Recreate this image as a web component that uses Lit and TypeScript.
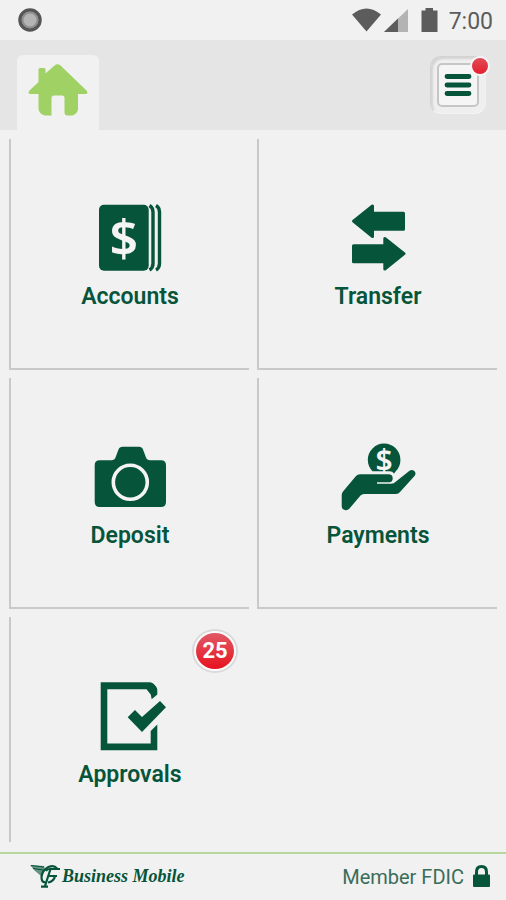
import { LitElement, html, css, svg, nothing } from "lit";
import { customElement } from "lit/decorators.js";

interface Tile {
  label: string;
  icon: unknown;
  badge?: number;
}

const accountsIcon = svg`
  <rect x="9" y="3.7" width="49.7" height="66" rx="5"/>
  <path d="M59.500 4.500Q63 6.500 63 11V62.500Q63 67 59.500 69M66 4.500Q69.500 6.500 69.500 11V62.500Q69.500 67 66 69" fill="none" stroke="currentColor" stroke-width="3.400"/>
  <text class="dollar" x="33.800" y="54.500" font-size="50" text-anchor="middle">$</text>`;

const transferIcon = svg`
  <g stroke="currentColor" stroke-width="3" stroke-linejoin="round">
    <path d="M15.500 20.200L34.500 5V12.200H65.500V28.300H34.500V35.500Z"/>
    <path d="M66 52.700L46.800 37.500V44.800H15.500V60.800H46.800V68Z"/>
  </g>`;

const depositIcon = svg`
  <path d="M9.700 20.300H21.500Q24.500 20.300 25.500 17.500L28.500 9.500Q29.500 6.700 32.500 6.700H49Q52 6.700 53 9.500L56 17.500Q57 20.300 60 20.300H71Q76 20.300 76 25.300V62Q76 67 71 67H9.700Q4.700 67 4.700 62V25.300Q4.700 20.300 9.700 20.300Z"/>
  <circle class="cut" cx="40.300" cy="42.300" r="17" stroke-width="3.600"/>`;

const paymentsIcon = svg`
  <path d="M34.500 31.300A16.300 16.300 0 1 1 58 31L56 33.500Q54.500 31.300 51.500 31.300Z"/>
  <text class="dollar" x="46" y="30.500" font-size="30" text-anchor="middle">$</text>
  <path d="M3.700 55Q3.700 53 5 51.500L18 36Q19.500 34.300 22 34.300H50.500Q54.700 34.300 54.700 38.400Q54.700 42 51 42.300H39V43.800H53Q56 43.800 58 41.500L71.500 30.800Q74 29 76.300 31Q78.500 33.200 76.700 35.700L62 52Q60.500 54 58 54H26Q24 54 22.500 55.500L11.500 68.500Q9.500 70.700 6.800 70Q3.700 69.300 3.700 66Z"/>`;

const approvalsIcon = svg`
  <path d="M10.700 3.300H60Q62 3.300 63.500 4.800L66 7.500Q67.300 9 67.300 11V15.500L61.700 20.300L60.700 15.500L56.500 10.300H17.300V64.500H60.700V52L67.300 45.500V71.300H10.700Z"/>
  <path d="M37.700 38.300L45 31L52 38L70 22L76 28.300L52 53Z"/>`;

@customElement("app-status-bar")
class AppStatusBar extends LitElement {
  static styles = css`
    :host {
      display: flex;
      align-items: center;
      justify-content: space-between;
      height: 40px;
      padding: 0 13px 0 18px;
      color: #5c5c5c;
      font-size: 23px;
    }
    svg { display: block; }
    .right { display: flex; align-items: center; gap: 11px; }
    .time { padding-top: 2px; }
  `;
  render() {
    return html`
      <svg width="24" height="24" viewBox="0 0 24 24">
        <circle cx="12" cy="12" r="10" fill="#b4b4b4" stroke="#565656" stroke-width="3.500"/>
        <circle cx="12" cy="12" r="7.500" fill="none" stroke="#8f8f8f" stroke-width="2"/>
      </svg>
      <div class="right">
        <svg width="86" height="26" viewBox="0 0 86 26" fill="currentColor">
          <path d="M0 7.500Q14.500-4.500 29 7.500L14.500 24.500Z"/>
          <path d="M32 25L56 2V25Z" opacity=".42"/>
          <path d="M32 25L46 11.600V25Z"/>
          <path d="M69.500 3.500H73.500V1H81V3.500H85.500V25H69.500Z"/>
        </svg>
        <span class="time">7:00</span>
      </div>`;
  }
}

@customElement("app-header")
class AppHeader extends LitElement {
  static styles = css`
    :host {
      display: flex;
      align-items: flex-end;
      justify-content: space-between;
      height: 90px;
      padding: 0 20px 0 17px;
      box-sizing: border-box;
      background: #e5e5e5;
    }
    .tab {
      display: flex;
      justify-content: center;
      width: 82px;
      height: 75px;
      padding-top: 8px;
      box-sizing: border-box;
      border-radius: 6px 6px 0 0;
      background: #f1f1f1;
      color: #9fd165;
    }
    .menu {
      position: relative;
      width: 56px;
      height: 58px;
      margin: 0 0 16px;
      padding: 6px;
      border: 1px solid #d2d2d2;
      border-right-color: #f1f1f1;
      border-bottom-color: #f4f4f4;
      border-radius: 11px;
      background: #efefef;
      box-shadow: inset 2px 2px 2px #d4d4d4;
      color: #06553a;
    }
    .face {
      display: flex;
      align-items: center;
      justify-content: center;
      height: 100%;
      box-sizing: border-box;
      border: 2px solid #c6c6c6;
      border-radius: 5px;
      background: #f5f5f5;
    }
    .dot {
      position: absolute;
      top: -1px;
      right: -5px;
      width: 16px;
      height: 16px;
      border: 2px solid #f6f6f6;
      border-radius: 50%;
      background: linear-gradient(#e14a57, #e3202e);
    }
  `;
  render() {
    return html`
      <a class="tab" href="#home" aria-label="Home">
        <svg width="60" height="54" viewBox="0 0 60 54" fill="currentColor">
          <path d="M10.500 15.500V6.500Q10.500 5 12 5H16Q17.500 5 17.500 6.500V10.500L26.500 2.500Q29.500 0 32.500 2.500L58.500 27.500Q61 31 57 31H50V46.500Q49 51 44.500 52.500H39.500Q36.500 52.500 36.500 49.500V35Q36.500 32.500 34 32.500H26Q23.500 32.500 23.500 35V52.500H17Q12 51.500 10.500 46.500V31H3Q-1 31 1.500 27.500L10.500 19Z"/>
        </svg>
      </a>
      <button class="menu" aria-label="Menu">
        <span class="face">
          <svg width="28" height="24" viewBox="0 0 28 24" stroke="currentColor" stroke-width="4.800" stroke-linecap="round">
            <path d="M3 3.500H25M3 12H25M3 20.500H25"/>
          </svg>
        </span>
        <span class="dot"></span>
      </button>`;
  }
}

@customElement("app-footer")
class AppFooter extends LitElement {
  static styles = css`
    :host {
      display: flex;
      align-items: center;
      justify-content: space-between;
      height: 46px;
      padding: 0 15px 0 30px;
      border-top: 2px solid #b7d79d;
      color: #06553a;
    }
    div { display: flex; align-items: center; white-space: nowrap; }
    svg { display: block; margin-bottom: 2px; }
    .brand {
      gap: 1px;
      font: italic bold 18px/22px "Liberation Serif", "Times New Roman", serif;
    }
    .brand span { margin-bottom: 2px; }
    .member { gap: 8px; font-size: 20px; color: #3a6d59; }
    .lock { color: #06553a; }
  `;
  render() {
    return html`
      <div class="brand">
        <svg width="31" height="26" viewBox="0 0 31 26" fill="none" stroke="currentColor">
          <path d="M0 2L14 3L15 6L11 13Q5 9 0 2Z" fill="currentColor" stroke="none" opacity=".6"/>
          <path d="M1 2.500L14 4M3 5.500L13 7" stroke-width="1.200"/>
          <path d="M27 5.500Q24 1.500 18.500 4Q12 7.500 11.500 14Q11.500 20 15.500 19" stroke-width="2.200"/>
          <path d="M16 8Q17 6 20 6H30" stroke-width="2"/>
          <path d="M20.500 6L15 23M11 23.700H18M18 13H27M25 13Q24 18.500 18 19.500" stroke-width="2.200"/>
        </svg>
        <span>Business Mobile</span>
      </div>
      <div class="member">
        <span>Member FDIC</span>
        <svg class="lock" width="19" height="24" viewBox="0 0 19 24">
          <path d="M4.500 12V8Q4.500 2.500 9.500 2.500T14.500 8V12" fill="none" stroke="currentColor" stroke-width="3"/>
          <rect x="1" y="10.500" width="17" height="12.500" rx="1" fill="currentColor"/>
        </svg>
      </div>`;
  }
}

@customElement("app-root")
class AppRoot extends LitElement {
  static styles = css`
    :host {
      display: flex;
      flex-direction: column;
      min-height: 100vh;
      background: #f1f1f1;
      font-family: Roboto, "Liberation Sans", sans-serif;
    }
    .grid {
      flex: 1;
      display: grid;
      grid-template-columns: 1fr 1fr;
      grid-template-rows: auto auto 1fr;
      gap: 8px;
      padding: 9px 9px 10px;
    }
    .tile {
      position: relative;
      display: flex;
      flex-direction: column;
      align-items: center;
      gap: 7px;
      padding: 62px 0 58px;
      border: 0 solid #c9c9c9;
      border-width: 0 0 2px 2px;
      background: none;
      color: #06553a;
      font: 600 23px/26px Roboto, "Liberation Sans", sans-serif;
    }
    .tile.last { border-bottom-width: 0; padding-bottom: 54px; }
    .icon { display: block; fill: currentColor; }
    .dollar { fill: #f4f4f4; font-family: "Noto Sans", sans-serif; font-weight: 600; }
    .cut { fill: none; stroke: #f4f4f4; }
    .badge {
      position: absolute;
      top: 14px;
      right: 13px;
      width: 38px;
      border: 2px solid #fafafa;
      border-radius: 50%;
      box-shadow: 0 0 0 2px #d9d9d9;
      background: linear-gradient(#df5a66, #e8121f);
      color: #fff;
      font-size: 22px;
      font-weight: 700;
      line-height: 36px;
      text-align: center;
    }
  `;

  private tiles: Tile[] = [
    { label: "Accounts", icon: accountsIcon },
    { label: "Transfer", icon: transferIcon },
    { label: "Deposit", icon: depositIcon },
    { label: "Payments", icon: paymentsIcon },
    { label: "Approvals", icon: approvalsIcon, badge: 25 },
  ];

  render() {
    return html`
      <app-status-bar></app-status-bar>
      <app-header></app-header>
      <main class="grid">
        ${this.tiles.map((t, i) => html`
          <button class="tile ${i === this.tiles.length - 1 ? "last" : ""}">
            <svg class="icon" width="80" height="76" viewBox="0 0 80 76">${t.icon}</svg>
            <span>${t.label}</span>
            ${t.badge ? html`<span class="badge">${t.badge}</span>` : nothing}
          </button>`)}
      </main>
      <app-footer></app-footer>`;
  }
}
